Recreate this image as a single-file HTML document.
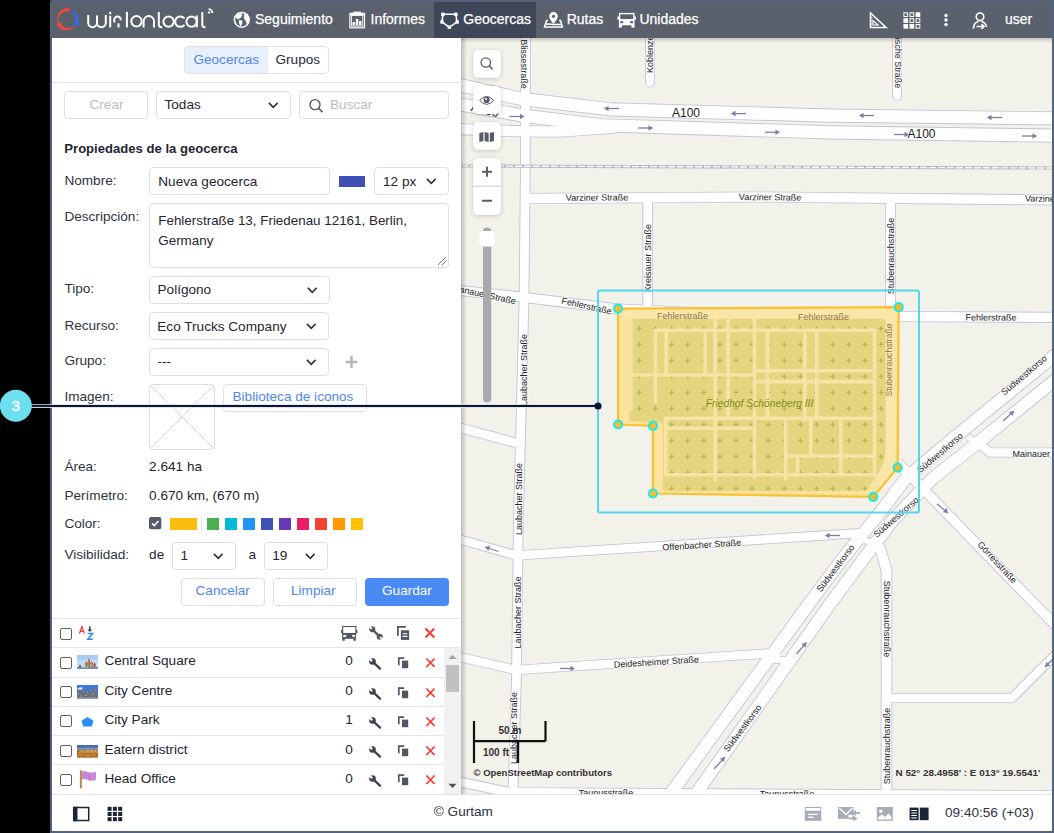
<!DOCTYPE html>
<html><head><meta charset="utf-8">
<style>
*{box-sizing:border-box;margin:0;padding:0}
html,body{width:1054px;height:833px;overflow:hidden;background:#000;font-family:"Liberation Sans",sans-serif}
#app{position:absolute;left:50px;top:0;width:1004px;height:833px;background:#56637c;border-radius:2px 0 0 0}
#hdr{position:absolute;left:52px;top:2px;width:1000px;height:36px;background:#5b616c}
#panel{position:absolute;left:52px;top:38px;width:409px;height:757px;background:#fff}
#map{position:absolute;left:461px;top:38px;width:591px;height:757px;background:#f2efe9;overflow:hidden}
#ftr{position:absolute;left:52px;top:795px;width:1000px;height:36px;background:#fff}
.t{position:absolute;line-height:1;white-space:nowrap}
.box{position:absolute;border:1px solid #dcdfe3;border-radius:4px;background:#fff}
.chev{position:absolute;width:7px;height:7px;border-right:1.6px solid #333;border-bottom:1.6px solid #333;transform:rotate(45deg)}
.lbl{font-size:13.6px;color:#2e3440}
.val{font-size:13.6px;color:#1f2531}
.nav{font-size:14px;color:#fff;-webkit-text-stroke:0.25px #fff}
.cb{position:absolute;width:12px;height:12px;border:1.3px solid #5c616b;border-radius:2px;background:#fff}
.sw{position:absolute;top:518px;width:12px;height:12px}
.row{position:absolute;left:52px;width:392px;height:1px;background:#e4e4e4}
</style></head><body>
<div id="app"></div>
<div id="hdr"></div>
<svg style="position:absolute;left:0;top:0" width="1054" height="40" viewBox="0 0 1054 40">
 <g><path d="M68.20,7.93 L67.28,7.96 L66.38,8.07 L65.48,8.25 L64.61,8.50 L63.77,8.82 L62.96,9.20 L62.19,9.64 L61.46,10.14 L60.78,10.69 L60.15,11.30 L59.57,11.95 L59.05,12.63 L58.58,13.36 L58.18,14.11 L57.85,14.89 L57.58,15.69 L57.37,16.51 L57.23,17.33 L57.16,18.16 L57.16,18.98 L57.22,19.80 L57.35,20.60 L57.54,21.39 L57.79,22.16 L58.36,21.99 L58.25,21.25 L58.19,20.50 L58.19,19.76 L58.26,19.03 L58.38,18.31 L58.56,17.60 L58.79,16.92 L59.07,16.26 L59.41,15.63 L59.79,15.03 L60.21,14.48 L60.68,13.96 L61.18,13.48 L61.71,13.05 L62.28,12.66 L62.87,12.33 L63.48,12.04 L64.10,11.81 L64.74,11.63 L65.38,11.50 L66.03,11.43 L66.68,11.41 L67.32,11.44 L67.95,11.52Z" fill="#f5473a"/><circle cx="68.08" cy="9.72" r="1.80" fill="#f5473a"/><path d="M57.27,25.25 L57.80,25.97 L58.39,26.63 L59.02,27.25 L59.69,27.82 L60.40,28.33 L61.14,28.77 L61.90,29.16 L62.69,29.49 L63.50,29.75 L64.32,29.95 L65.15,30.09 L65.98,30.16 L66.81,30.16 L67.63,30.11 L68.44,29.99 L69.23,29.81 L70.01,29.57 L70.75,29.27 L71.47,28.92 L72.15,28.52 L72.79,28.07 L73.40,27.58 L73.96,27.04 L74.47,26.47 L74.05,26.05 L73.47,26.48 L72.87,26.87 L72.25,27.20 L71.61,27.49 L70.95,27.72 L70.28,27.90 L69.61,28.03 L68.93,28.10 L68.26,28.12 L67.59,28.09 L66.93,28.01 L66.28,27.88 L65.66,27.70 L65.05,27.47 L64.46,27.20 L63.91,26.89 L63.38,26.54 L62.89,26.16 L62.43,25.74 L62.01,25.29 L61.62,24.81 L61.28,24.31 L60.99,23.79 L60.73,23.25Z" fill="#f5473a"/><circle cx="59.00" cy="24.25" r="2.00" fill="#f5473a"/><path d="M69.14,9.55 L69.93,9.66 L70.72,9.84 L71.50,10.08 L72.26,10.38 L73.00,10.74 L73.72,11.17 L74.40,11.65 L75.04,12.19 L75.64,12.79 L76.19,13.43 L76.69,14.12 L77.14,14.86 L77.53,15.63 L77.86,16.43 L78.13,17.27 L78.33,18.12 L78.46,19.00 L78.51,19.89 L78.50,20.78 L78.42,21.67 L78.26,22.57 L78.03,23.45 L77.73,24.31 L77.36,25.15 L74.24,23.35 L74.59,22.82 L74.90,22.25 L75.16,21.66 L75.38,21.05 L75.55,20.41 L75.67,19.76 L75.73,19.10 L75.74,18.42 L75.70,17.75 L75.60,17.07 L75.45,16.40 L75.24,15.74 L74.98,15.10 L74.66,14.47 L74.29,13.87 L73.87,13.29 L73.41,12.75 L72.89,12.24 L72.34,11.77 L71.74,11.35 L71.11,10.97 L70.45,10.64 L69.75,10.36 L69.03,10.14Z" fill="#2d6bff"/><circle cx="75.80" cy="24.25" r="1.80" fill="#2d6bff"/></g>
 <g fill="none" stroke="#fff" stroke-width="2" stroke-linecap="butt">
  <path d="M88.2,15 V22.8 a4.4,4.4 0 0 0 8.8,0 V15.5 M97,22.8 a4.4,4.4 0 0 0 8.8,0 V15"/>
  <path d="M110.2,15.8 V27.4 M110.2,11.8 V14.2"/>
  <path d="M114.3,22.6 V19.6 a3.2,3.2 0 0 1 6.4,0 V20.3 M118.5,23.2 V27.4"/>
  <path d="M126.9,11.8 V27.4"/>
  <circle cx="136.5" cy="21.3" r="5.2"/>
  <path d="M143.6,27.4 V21.3 a5.2,5.2 0 0 1 10.4,0 V27.4"/>
  <path d="M158.8,12 V24.6 a2.6,2.6 0 0 0 2.6,2.6 h0.8"/>
  <circle cx="168.6" cy="21.6" r="5.2"/>
  <path d="M184.4,18.4 A5.2,5.2 0 1 0 184.4,24.8"/>
  <circle cx="191.6" cy="21.6" r="5.2"/>
  <path d="M196.8,15.5 V27.4"/>
  <path d="M202.3,12 V24.6 a2.6,2.6 0 0 0 2.6,2.6 h0.6"/>
  <path d="M208.6,9.2 a3.8,3.8 0 0 1 3.8,3.8" stroke-width="1.8"/>
 </g>
 <circle cx="209" cy="12.4" r="1.2" fill="#fff"/>
</svg>
<div style="position:absolute;left:434px;top:2px;width:102px;height:36px;background:#3e4657"></div>
<svg style="position:absolute;left:0;top:0" width="1054" height="40" viewBox="0 0 1054 40">
 <!-- globe -->
 <circle cx="241.8" cy="19.8" r="7.4" fill="none" stroke="#fff" stroke-width="1.5"/>
 <path d="M235.6,16.5 Q237.5,13 241.5,13.2 L242.3,15.5 L240.8,17.8 L238.3,19.2 Q236,18.5 235.6,16.5Z" fill="#fff"/>
 <path d="M238.8,20.2 L242.4,20.6 L242.2,23.8 L240.2,26.6 L239.2,23.6Z" fill="#fff"/>
 <path d="M244.3,13.8 L247.3,14.8 L249,17.8 L248.6,21.6 L246.6,24 L245.6,20.8 L243.8,18.6 Z" fill="#fff"/>
 <!-- informes clipboard -->
 <rect x="349.9" y="13.4" width="14.6" height="14.4" fill="none" stroke="#fff" stroke-width="1.2"/>
 <rect x="351.6" y="15.4" width="11.2" height="10.7" fill="none" stroke="#fff" stroke-width="0.9"/>
 <rect x="350" y="13" width="14.5" height="2.3" fill="#fff"/>
 <rect x="353.2" y="11.6" width="7.8" height="2" fill="#fff"/>
 <rect x="352.6" y="22" width="2.4" height="3.4" fill="#fff"/>
 <rect x="355.8" y="19" width="2.5" height="6.4" fill="#fff"/>
 <rect x="359.1" y="21" width="2.4" height="4.4" fill="#fff"/>
 <!-- geocercas polygon -->
 <path d="M443,14.2 L455.8,14.2 L457,22 L449.3,27.3 L442,22 Z" fill="none" stroke="#fff" stroke-width="1.6"/>
 <rect x="441.2" y="12.6" width="3.4" height="3.4" fill="#fff"/><rect x="454.2" y="12.6" width="3.4" height="3.4" fill="#fff"/>
 <rect x="455.4" y="20.3" width="3.4" height="3.4" fill="#fff"/><rect x="447.6" y="25.5" width="3.4" height="3.4" fill="#fff"/>
 <rect x="440.3" y="20.3" width="3.4" height="3.4" fill="#fff"/>
 <!-- rutas -->
 <path d="M553.5,24 C551,20.5 549.2,18.5 549.2,16.2 a4.3,4.3 0 0 1 8.6,0 C557.8,18.5 556,20.5 553.5,24z" fill="#fff"/>
 <circle cx="553.5" cy="16.3" r="1.6" fill="#5b616c"/>
 <path d="M548,20.5 H546.5 L544.5,27 H562.5 L560.5,20.5 H559 M545.5,24.3 C549,23 553,25.5 561.5,24.3" fill="none" stroke="#fff" stroke-width="1.5"/>
 <!-- unidades bus -->
 <rect x="619.6" y="13.6" width="14.2" height="6.4" fill="none" stroke="#fff" stroke-width="1.4"/>
 <rect x="618.9" y="19.3" width="15.6" height="6" fill="#fff"/>
 <rect x="620.3" y="21.2" width="3" height="2" fill="#5b616c"/><rect x="630.1" y="21.2" width="3" height="2" fill="#5b616c"/>
 <rect x="618.9" y="25" width="3" height="2.6" fill="#fff"/><rect x="631.5" y="25" width="3" height="2.6" fill="#fff"/>
 <rect x="617.5" y="16.5" width="1.6" height="3.2" fill="#fff"/><rect x="634.3" y="16.5" width="1.6" height="3.2" fill="#fff"/>
 <!-- ruler triangle -->
 <path d="M870.5,13 V27.5 H886 Z" fill="none" stroke="#fff" stroke-width="1.6" stroke-linejoin="miter"/>
 <path d="M873,20.5 V25 H878 Z" fill="none" stroke="#fff" stroke-width="1.2"/>
 <path d="M870.5,18 h2 M870.5,21 h2 M870.5,24 h2" stroke="#fff" stroke-width="1"/>
 <!-- grid -->
 <g fill="none" stroke="#fff" stroke-width="1"><rect x="903.9" y="12.8" width="3.7" height="3.7"/><rect x="910.0" y="12.8" width="3.7" height="3.7"/><rect x="910.0" y="18.7" width="3.7" height="3.7"/><rect x="916.1" y="18.7" width="3.7" height="3.7"/><rect x="916.1" y="24.5" width="3.7" height="3.7"/></g>
 <g fill="#fff"><rect x="915.6" y="12.3" width="4.7" height="4.7"/><rect x="903.4" y="18.2" width="4.7" height="4.7"/><rect x="903.4" y="24.0" width="4.7" height="4.7"/><rect x="909.5" y="24.0" width="4.7" height="4.7"/></g>
 <circle cx="946" cy="15.5" r="1.7" fill="#fff"/><circle cx="946" cy="20" r="1.7" fill="#fff"/><circle cx="946" cy="24.6" r="1.7" fill="#fff"/>
 <!-- user -->
 <circle cx="980" cy="16.8" r="3.8" fill="none" stroke="#fff" stroke-width="1.6"/>
 <path d="M973.5,28.8 C973.5,24.5 976,22 978.5,21.5 M981.5,21.5 C984,22 986.5,24.5 986.5,27" fill="none" stroke="#fff" stroke-width="1.6"/>
 <path d="M976.5,26.5 H984 M981.5,24 L984,26.5 L981.5,29" fill="none" stroke="#fff" stroke-width="1.6"/>
</svg>
<div class="t nav" style="left:255px;top:12px">Seguimiento</div>
<div class="t nav" style="left:370.5px;top:12px">Informes</div>
<div class="t nav" style="left:463.3px;top:12px">Geocercas</div>
<div class="t nav" style="left:566.7px;top:12px">Rutas</div>
<div class="t nav" style="left:639.4px;top:12px">Unidades</div>
<div class="t nav" style="left:1005px;top:12px">user</div>

<div id="panel"></div>
<!-- segmented tabs -->
<div class="box" style="left:184px;top:46px;width:145px;height:28px;overflow:hidden;border-color:#e0e3e8"><div style="position:absolute;left:0;top:0;width:82.5px;height:100%;background:#e8f0fd"></div></div>
<div class="t" style="left:193.4px;top:52.5px;font-size:13.6px;color:#4f87f0">Geocercas</div>
<div class="t" style="left:275.5px;top:52.5px;font-size:13.6px;color:#272c35">Grupos</div>
<div style="position:absolute;left:52px;top:82px;width:409px;height:1px;background:#e6e6e6"></div>
<!-- toolbar -->
<div class="box" style="left:64px;top:91px;width:84px;height:28px"></div>
<div class="t" style="left:89.5px;top:97.8px;font-size:13.6px;color:#b9bec6">Crear</div>
<div class="box" style="left:156px;top:91px;width:135px;height:28px"></div>
<div class="t val" style="left:164.5px;top:97.8px">Todas</div>
<svg style="position:absolute;left:267.5px;top:101.5px" width="11" height="7"><path d="M0.9,0.9 L5.25,5.3 L9.6,0.9" fill="none" stroke="#2c323d" stroke-width="1.6"/></svg>
<div class="box" style="left:299px;top:91px;width:149.5px;height:28px"></div>
<svg style="position:absolute;left:308px;top:98px" width="18" height="16"><circle cx="7" cy="6.6" r="5" fill="none" stroke="#555b66" stroke-width="1.4"/><path d="M10.6,10.2 L14.5,14.1" stroke="#555b66" stroke-width="1.6"/></svg>
<div class="t" style="left:330px;top:97.8px;font-size:13.6px;color:#b9bec6">Buscar</div>
<!-- properties -->
<div class="t" style="left:64.3px;top:141.8px;font-size:13.1px;font-weight:bold;color:#1f2633">Propiedades de la geocerca</div>
<div class="t lbl" style="left:64.4px;top:173.5px">Nombre:</div>
<div class="box" style="left:149px;top:167px;width:181px;height:28px"></div>
<div class="t val" style="left:158.3px;top:174.5px">Nueva geocerca</div>
<div style="position:absolute;left:339px;top:176px;width:25.5px;height:10.5px;background:#3f4fb5"></div>
<div class="box" style="left:374px;top:167px;width:75px;height:28px"></div>
<div class="t val" style="left:383px;top:174.5px">12 px</div>
<svg style="position:absolute;left:425.5px;top:177.5px" width="11" height="7"><path d="M0.9,0.9 L5.25,5.3 L9.6,0.9" fill="none" stroke="#2c323d" stroke-width="1.6"/></svg>
<div class="t lbl" style="left:64.4px;top:209.6px">Descripción:</div>
<div class="box" style="left:149px;top:203px;width:300px;height:65px"></div>
<div class="t val" style="left:158.3px;top:214px;font-size:13.4px">Fehlerstraße 13, Friedenau 12161, Berlin,</div>
<div class="t val" style="left:158.3px;top:234px;font-size:13.4px">Germany</div>
<svg style="position:absolute;left:437px;top:256px" width="10" height="10"><path d="M1,9 L9,1 M5,9 L9,5" stroke="#777" stroke-width="1"/></svg>
<div class="t lbl" style="left:64.4px;top:282.3px">Tipo:</div>
<div class="box" style="left:149px;top:276px;width:181px;height:28px"></div>
<div class="t val" style="left:157.5px;top:283.2px">Polígono</div>
<svg style="position:absolute;left:306.5px;top:286.5px" width="11" height="7"><path d="M0.9,0.9 L5.25,5.3 L9.6,0.9" fill="none" stroke="#2c323d" stroke-width="1.6"/></svg>
<div class="t lbl" style="left:64.4px;top:319.3px">Recurso:</div>
<div class="box" style="left:149px;top:312px;width:180px;height:28px"></div>
<div class="t val" style="left:157.3px;top:319.5px">Eco Trucks Company</div>
<svg style="position:absolute;left:306px;top:322.5px" width="11" height="7"><path d="M0.9,0.9 L5.25,5.3 L9.6,0.9" fill="none" stroke="#2c323d" stroke-width="1.6"/></svg>
<div class="t lbl" style="left:64.4px;top:354.2px">Grupo:</div>
<div class="box" style="left:149px;top:348px;width:180px;height:28px"></div>
<div class="t val" style="left:157.5px;top:355px">---</div>
<svg style="position:absolute;left:306px;top:358.5px" width="11" height="7"><path d="M0.9,0.9 L5.25,5.3 L9.6,0.9" fill="none" stroke="#2c323d" stroke-width="1.6"/></svg>
<svg style="position:absolute;left:344px;top:355px" width="15" height="14"><path d="M7.5,1 V13 M1.5,7 H13.5" stroke="#b4b8bf" stroke-width="2.6"/></svg>
<div class="t lbl" style="left:64.4px;top:390px">Imagen:</div>
<div class="box" style="left:149px;top:384px;width:66px;height:66px;border-color:#dadde2"></div>
<svg style="position:absolute;left:150px;top:385px" width="64" height="64"><path d="M0,0 L64,64 M64,0 L0,64" stroke="#d6d8dc" stroke-width="1"/></svg>
<div class="box" style="left:223px;top:384px;width:144px;height:28px"></div>
<div class="t" style="left:232.5px;top:390px;font-size:13.6px;color:#4f87f0">Biblioteca de iconos</div>
<div class="t lbl" style="left:64.4px;top:460.4px">Área:</div>
<div class="t val" style="left:149.1px;top:460.4px">2.641 ha</div>
<div class="t lbl" style="left:64.4px;top:488.6px">Perímetro:</div>
<div class="t val" style="left:149.1px;top:488.6px">0.670 km, (670 m)</div>
<div class="t lbl" style="left:64.4px;top:516.8px">Color:</div>
<svg style="position:absolute;left:149px;top:517.4px" width="13" height="13"><rect x="0" y="0" width="12.3" height="12.2" rx="2" fill="#565c67"/><path d="M3,6.3 L5.3,8.5 L9.5,4" fill="none" stroke="#fff" stroke-width="1.6"/></svg>
<div style="position:absolute;left:169.5px;top:518.3px;width:27px;height:11.5px;background:#fdbd10"></div>
<div style="position:absolute;left:201px;top:516px;width:1px;height:16px;background:#e3e3e3"></div>
<div class="sw" style="left:206.8px;background:#4caf50"></div>
<div class="sw" style="left:225px;background:#00bcd4"></div>
<div class="sw" style="left:243.2px;background:#2196f3"></div>
<div class="sw" style="left:261.4px;background:#3f51b5"></div>
<div class="sw" style="left:279.2px;background:#673ab7"></div>
<div class="sw" style="left:297.2px;background:#e91e63"></div>
<div class="sw" style="left:315.2px;background:#f44336"></div>
<div class="sw" style="left:333px;background:#ff9800"></div>
<div class="sw" style="left:351px;background:#ffc107"></div>
<div class="t lbl" style="left:64.4px;top:548.4px">Visibilidad:</div>
<div class="t val" style="left:149.1px;top:548.4px">de</div>
<div class="box" style="left:172px;top:542px;width:64px;height:28px"></div>
<div class="t val" style="left:180.5px;top:549px">1</div>
<svg style="position:absolute;left:213px;top:552.5px" width="11" height="7"><path d="M0.9,0.9 L5.25,5.3 L9.6,0.9" fill="none" stroke="#2c323d" stroke-width="1.6"/></svg>
<div class="t val" style="left:248.4px;top:548.4px">a</div>
<div class="box" style="left:264px;top:542px;width:64px;height:28px"></div>
<div class="t val" style="left:272.3px;top:549px">19</div>
<svg style="position:absolute;left:305px;top:552.5px" width="11" height="7"><path d="M0.9,0.9 L5.25,5.3 L9.6,0.9" fill="none" stroke="#2c323d" stroke-width="1.6"/></svg>
<div class="box" style="left:181px;top:578px;width:84px;height:28px"></div>
<div class="t" style="left:195.5px;top:584.3px;font-size:13.6px;color:#4f87f0">Cancelar</div>
<div class="box" style="left:273px;top:578px;width:84px;height:28px"></div>
<div class="t" style="left:291px;top:584.3px;font-size:13.6px;color:#4f87f0">Limpiar</div>
<div style="position:absolute;left:365px;top:578px;width:84px;height:28px;background:#4a8af4;border-radius:4px"></div>
<div class="t" style="left:382px;top:584.3px;font-size:13.6px;color:#fff">Guardar</div>
<div style="position:absolute;left:52px;top:618px;width:409px;height:1px;background:#e6e6e6"></div>

<svg style="position:absolute;left:461px;top:38px" width="591" height="757" viewBox="461 38 591 757">
<rect x="461" y="38" width="591" height="757" fill="#f3f2ea"/>
<g fill="none" stroke-linejoin="round">
<path d="M455,84 L521,98.8 L611,109.4 L830,115.6 L1060,118.5" stroke="#c3c3d8" stroke-width="14.1" stroke-linecap="butt"/>
<path d="M455,103.5 L521,115.3 L600,125.2 L830,132.4 L1060,135.7" stroke="#c3c3d8" stroke-width="14.1" stroke-linecap="butt"/>
<path d="M455,129 L521,131.4 L560,131.5 L615,127.5" stroke="#c3c3d8" stroke-width="12.1" stroke-linecap="butt"/>
<path d="M525.5,30 L525.3,170 L524,300 L518.4,520 L516.4,680 L512.7,800" stroke="#c3c3d8" stroke-width="10.6" stroke-linecap="butt"/>
<path d="M649.9,30 L649.9,82.5" stroke="#c3c3d8" stroke-width="9.6" stroke-linecap="round"/>
<path d="M897,30 L897,96" stroke="#c3c3d8" stroke-width="9.6" stroke-linecap="round"/>
<path d="M525,198.5 L761,197 L1060,200" stroke="#c3c3d8" stroke-width="11.1" stroke-linecap="butt"/>
<path d="M647.7,198 L647.7,312" stroke="#c3c3d8" stroke-width="10.6" stroke-linecap="butt"/>
<path d="M890.5,198 L890.5,312" stroke="#c3c3d8" stroke-width="10.6" stroke-linecap="butt"/>
<path d="M455,290 L525,297.5 L618,309 L700,313 L898,316.5 L1060,317.4" stroke="#c3c3d8" stroke-width="11.1" stroke-linecap="butt"/>
<path d="M455,426.5 L520,444" stroke="#c3c3d8" stroke-width="10.6" stroke-linecap="butt"/>
<path d="M455,538 L516,555.5" stroke="#c3c3d8" stroke-width="10.1" stroke-linecap="butt"/>
<path d="M516,555.5 L855.4,533.4 L865,532.5" stroke="#c3c3d8" stroke-width="10.1" stroke-linecap="butt"/>
<path d="M455,656 L516,670" stroke="#c3c3d8" stroke-width="10.1" stroke-linecap="butt"/>
<path d="M516,670 L767.8,653.5 L780,653" stroke="#c3c3d8" stroke-width="10.1" stroke-linecap="butt"/>
<path d="M664,803 L676.2,786 L809.4,603.2 L841.5,560 L882,510 L906,478 L950,441 L1060,351" stroke="#c3c3d8" stroke-width="13.6" stroke-linecap="butt"/>
<path d="M689,803 L701.5,786 L830.6,603.2 L862,561 L893,520 L933,478 L980,441 L1060,376" stroke="#c3c3d8" stroke-width="13.6" stroke-linecap="butt"/>
<path d="M968,437 L986,449" stroke="#c3c3d8" stroke-width="7.6" stroke-linecap="butt"/>
<path d="M856,539 L878,543" stroke="#c3c3d8" stroke-width="7.6" stroke-linecap="butt"/>
<path d="M770,660 L796,660" stroke="#c3c3d8" stroke-width="7.6" stroke-linecap="butt"/>
<path d="M870,541 L880,548 L886.5,570 L886.5,800" stroke="#c3c3d8" stroke-width="11.6" stroke-linecap="butt"/>
<path d="M886.5,698 L1012,698 L1060,650" stroke="#c3c3d8" stroke-width="10.1" stroke-linecap="butt"/>
<path d="M897,462 L1060,630" stroke="#c3c3d8" stroke-width="11.1" stroke-linecap="butt"/>
<path d="M975,440 L990,452.5 L1060,452.5" stroke="#c3c3d8" stroke-width="10.1" stroke-linecap="butt"/>
<path d="M455,781 L510,792.5 L1060,795.5" stroke="#c3c3d8" stroke-width="10.6" stroke-linecap="butt"/>
<path d="M455,84 L521,98.8 L611,109.4 L830,115.6 L1060,118.5" stroke="#fefefe" stroke-width="12.3" stroke-linecap="butt"/>
<path d="M455,103.5 L521,115.3 L600,125.2 L830,132.4 L1060,135.7" stroke="#fefefe" stroke-width="12.3" stroke-linecap="butt"/>
<path d="M455,129 L521,131.4 L560,131.5 L615,127.5" stroke="#fefefe" stroke-width="10.3" stroke-linecap="butt"/>
<path d="M525.5,30 L525.3,170 L524,300 L518.4,520 L516.4,680 L512.7,800" stroke="#fefefe" stroke-width="8.8" stroke-linecap="butt"/>
<path d="M649.9,30 L649.9,82.5" stroke="#fefefe" stroke-width="7.8" stroke-linecap="round"/>
<path d="M897,30 L897,96" stroke="#fefefe" stroke-width="7.8" stroke-linecap="round"/>
<path d="M525,198.5 L761,197 L1060,200" stroke="#fefefe" stroke-width="9.3" stroke-linecap="butt"/>
<path d="M647.7,198 L647.7,312" stroke="#fefefe" stroke-width="8.8" stroke-linecap="butt"/>
<path d="M890.5,198 L890.5,312" stroke="#fefefe" stroke-width="8.8" stroke-linecap="butt"/>
<path d="M455,290 L525,297.5 L618,309 L700,313 L898,316.5 L1060,317.4" stroke="#fefefe" stroke-width="9.3" stroke-linecap="butt"/>
<path d="M455,426.5 L520,444" stroke="#fefefe" stroke-width="8.8" stroke-linecap="butt"/>
<path d="M455,538 L516,555.5" stroke="#fefefe" stroke-width="8.3" stroke-linecap="butt"/>
<path d="M516,555.5 L855.4,533.4 L865,532.5" stroke="#fefefe" stroke-width="8.3" stroke-linecap="butt"/>
<path d="M455,656 L516,670" stroke="#fefefe" stroke-width="8.3" stroke-linecap="butt"/>
<path d="M516,670 L767.8,653.5 L780,653" stroke="#fefefe" stroke-width="8.3" stroke-linecap="butt"/>
<path d="M664,803 L676.2,786 L809.4,603.2 L841.5,560 L882,510 L906,478 L950,441 L1060,351" stroke="#fefefe" stroke-width="11.8" stroke-linecap="butt"/>
<path d="M689,803 L701.5,786 L830.6,603.2 L862,561 L893,520 L933,478 L980,441 L1060,376" stroke="#fefefe" stroke-width="11.8" stroke-linecap="butt"/>
<path d="M968,437 L986,449" stroke="#fefefe" stroke-width="5.8" stroke-linecap="butt"/>
<path d="M856,539 L878,543" stroke="#fefefe" stroke-width="5.8" stroke-linecap="butt"/>
<path d="M770,660 L796,660" stroke="#fefefe" stroke-width="5.8" stroke-linecap="butt"/>
<path d="M870,541 L880,548 L886.5,570 L886.5,800" stroke="#fefefe" stroke-width="9.8" stroke-linecap="butt"/>
<path d="M886.5,698 L1012,698 L1060,650" stroke="#fefefe" stroke-width="8.3" stroke-linecap="butt"/>
<path d="M897,462 L1060,630" stroke="#fefefe" stroke-width="9.3" stroke-linecap="butt"/>
<path d="M975,440 L990,452.5 L1060,452.5" stroke="#fefefe" stroke-width="8.3" stroke-linecap="butt"/>
<path d="M455,781 L510,792.5 L1060,795.5" stroke="#fefefe" stroke-width="8.8" stroke-linecap="butt"/>
</g>
<path d="M461,166 L1052,168" stroke="#b8b8c4" stroke-width="3.2" fill="none"/>
<path d="M461,166 L1052,168" stroke="#fafafa" stroke-width="1.4" stroke-dasharray="7,2" fill="none"/>
<path d="M618.1,308.6 L898.7,307.2 L897.7,467.7 L873.2,496.8 L652.9,493.5 L652.9,425.8 L618.1,424.5Z" fill="#fbe29e"/>
<path d="M631,319 L883,319 Q886,319 886,322 L886,452 Q886,460 880,470 L868,488 Q866,491 862,491 L666,491 Q663,491 663,488 L663,423 L632,421 Q629,421 629,418 L629,321 Q629,319 631,319Z" fill="#e5d57f"/>
<clipPath id="olc"><path d="M631,319 L883,319 Q886,319 886,322 L886,452 Q886,460 880,470 L868,488 Q866,491 862,491 L666,491 Q663,491 663,488 L663,423 L632,421 Q629,421 629,418 L629,321 Q629,319 631,319Z"/></clipPath>
<path clip-path="url(#olc)" d="M636.9,328.4h5M639.4,325.9v5M636.9,344.4h5M639.4,341.9v5M636.9,360.4h5M639.4,357.9v5M636.9,376.4h5M639.4,373.9v5M636.9,392.4h5M639.4,389.9v5M636.9,408.4h5M639.4,405.9v5M636.9,424.4h5M639.4,421.9v5M636.9,440.4h5M639.4,437.9v5M636.9,456.4h5M639.4,453.9v5M636.9,472.4h5M639.4,469.9v5M636.9,488.4h5M639.4,485.9v5M653.0,328.4h5M655.5,325.9v5M653.0,344.4h5M655.5,341.9v5M653.0,360.4h5M655.5,357.9v5M653.0,376.4h5M655.5,373.9v5M653.0,392.4h5M655.5,389.9v5M653.0,408.4h5M655.5,405.9v5M653.0,424.4h5M655.5,421.9v5M653.0,440.4h5M655.5,437.9v5M653.0,456.4h5M655.5,453.9v5M653.0,472.4h5M655.5,469.9v5M653.0,488.4h5M655.5,485.9v5M669.1,328.4h5M671.6,325.9v5M669.1,344.4h5M671.6,341.9v5M669.1,360.4h5M671.6,357.9v5M669.1,376.4h5M671.6,373.9v5M669.1,392.4h5M671.6,389.9v5M669.1,408.4h5M671.6,405.9v5M669.1,424.4h5M671.6,421.9v5M669.1,440.4h5M671.6,437.9v5M669.1,456.4h5M671.6,453.9v5M669.1,472.4h5M671.6,469.9v5M669.1,488.4h5M671.6,485.9v5M685.2,328.4h5M687.7,325.9v5M685.2,344.4h5M687.7,341.9v5M685.2,360.4h5M687.7,357.9v5M685.2,376.4h5M687.7,373.9v5M685.2,392.4h5M687.7,389.9v5M685.2,408.4h5M687.7,405.9v5M685.2,424.4h5M687.7,421.9v5M685.2,440.4h5M687.7,437.9v5M685.2,456.4h5M687.7,453.9v5M685.2,472.4h5M687.7,469.9v5M685.2,488.4h5M687.7,485.9v5M701.3,328.4h5M703.8,325.9v5M701.3,344.4h5M703.8,341.9v5M701.3,360.4h5M703.8,357.9v5M701.3,376.4h5M703.8,373.9v5M701.3,392.4h5M703.8,389.9v5M701.3,408.4h5M703.8,405.9v5M701.3,424.4h5M703.8,421.9v5M701.3,440.4h5M703.8,437.9v5M701.3,456.4h5M703.8,453.9v5M701.3,472.4h5M703.8,469.9v5M701.3,488.4h5M703.8,485.9v5M717.4,328.4h5M719.9,325.9v5M717.4,344.4h5M719.9,341.9v5M717.4,360.4h5M719.9,357.9v5M717.4,376.4h5M719.9,373.9v5M717.4,392.4h5M719.9,389.9v5M717.4,408.4h5M719.9,405.9v5M717.4,424.4h5M719.9,421.9v5M717.4,440.4h5M719.9,437.9v5M717.4,456.4h5M719.9,453.9v5M717.4,472.4h5M719.9,469.9v5M717.4,488.4h5M719.9,485.9v5M733.5,328.4h5M736.0,325.9v5M733.5,344.4h5M736.0,341.9v5M733.5,360.4h5M736.0,357.9v5M733.5,376.4h5M736.0,373.9v5M733.5,392.4h5M736.0,389.9v5M733.5,408.4h5M736.0,405.9v5M733.5,424.4h5M736.0,421.9v5M733.5,440.4h5M736.0,437.9v5M733.5,456.4h5M736.0,453.9v5M733.5,472.4h5M736.0,469.9v5M733.5,488.4h5M736.0,485.9v5M749.6,328.4h5M752.1,325.9v5M749.6,344.4h5M752.1,341.9v5M749.6,360.4h5M752.1,357.9v5M749.6,376.4h5M752.1,373.9v5M749.6,392.4h5M752.1,389.9v5M749.6,408.4h5M752.1,405.9v5M749.6,424.4h5M752.1,421.9v5M749.6,440.4h5M752.1,437.9v5M749.6,456.4h5M752.1,453.9v5M749.6,472.4h5M752.1,469.9v5M749.6,488.4h5M752.1,485.9v5M765.7,328.4h5M768.2,325.9v5M765.7,344.4h5M768.2,341.9v5M765.7,360.4h5M768.2,357.9v5M765.7,376.4h5M768.2,373.9v5M765.7,392.4h5M768.2,389.9v5M765.7,408.4h5M768.2,405.9v5M765.7,424.4h5M768.2,421.9v5M765.7,440.4h5M768.2,437.9v5M765.7,456.4h5M768.2,453.9v5M765.7,472.4h5M768.2,469.9v5M765.7,488.4h5M768.2,485.9v5M781.8,328.4h5M784.3,325.9v5M781.8,344.4h5M784.3,341.9v5M781.8,360.4h5M784.3,357.9v5M781.8,376.4h5M784.3,373.9v5M781.8,392.4h5M784.3,389.9v5M781.8,408.4h5M784.3,405.9v5M781.8,424.4h5M784.3,421.9v5M781.8,440.4h5M784.3,437.9v5M781.8,456.4h5M784.3,453.9v5M781.8,472.4h5M784.3,469.9v5M781.8,488.4h5M784.3,485.9v5M797.9,328.4h5M800.4,325.9v5M797.9,344.4h5M800.4,341.9v5M797.9,360.4h5M800.4,357.9v5M797.9,376.4h5M800.4,373.9v5M797.9,392.4h5M800.4,389.9v5M797.9,408.4h5M800.4,405.9v5M797.9,424.4h5M800.4,421.9v5M797.9,440.4h5M800.4,437.9v5M797.9,456.4h5M800.4,453.9v5M797.9,472.4h5M800.4,469.9v5M797.9,488.4h5M800.4,485.9v5M814.0,328.4h5M816.5,325.9v5M814.0,344.4h5M816.5,341.9v5M814.0,360.4h5M816.5,357.9v5M814.0,376.4h5M816.5,373.9v5M814.0,392.4h5M816.5,389.9v5M814.0,408.4h5M816.5,405.9v5M814.0,424.4h5M816.5,421.9v5M814.0,440.4h5M816.5,437.9v5M814.0,456.4h5M816.5,453.9v5M814.0,472.4h5M816.5,469.9v5M814.0,488.4h5M816.5,485.9v5M830.1,328.4h5M832.6,325.9v5M830.1,344.4h5M832.6,341.9v5M830.1,360.4h5M832.6,357.9v5M830.1,376.4h5M832.6,373.9v5M830.1,392.4h5M832.6,389.9v5M830.1,408.4h5M832.6,405.9v5M830.1,424.4h5M832.6,421.9v5M830.1,440.4h5M832.6,437.9v5M830.1,456.4h5M832.6,453.9v5M830.1,472.4h5M832.6,469.9v5M830.1,488.4h5M832.6,485.9v5M846.2,328.4h5M848.7,325.9v5M846.2,344.4h5M848.7,341.9v5M846.2,360.4h5M848.7,357.9v5M846.2,376.4h5M848.7,373.9v5M846.2,392.4h5M848.7,389.9v5M846.2,408.4h5M848.7,405.9v5M846.2,424.4h5M848.7,421.9v5M846.2,440.4h5M848.7,437.9v5M846.2,456.4h5M848.7,453.9v5M846.2,472.4h5M848.7,469.9v5M846.2,488.4h5M848.7,485.9v5M862.3,328.4h5M864.8,325.9v5M862.3,344.4h5M864.8,341.9v5M862.3,360.4h5M864.8,357.9v5M862.3,376.4h5M864.8,373.9v5M862.3,392.4h5M864.8,389.9v5M862.3,408.4h5M864.8,405.9v5M862.3,424.4h5M864.8,421.9v5M862.3,440.4h5M864.8,437.9v5M862.3,456.4h5M864.8,453.9v5M862.3,472.4h5M864.8,469.9v5M862.3,488.4h5M864.8,485.9v5M878.4,328.4h5M880.9,325.9v5M878.4,344.4h5M880.9,341.9v5M878.4,360.4h5M880.9,357.9v5M878.4,376.4h5M880.9,373.9v5M878.4,392.4h5M880.9,389.9v5M878.4,408.4h5M880.9,405.9v5M878.4,424.4h5M880.9,421.9v5M878.4,440.4h5M880.9,437.9v5M878.4,456.4h5M880.9,453.9v5M878.4,472.4h5M880.9,469.9v5M878.4,488.4h5M880.9,485.9v5" stroke="#b9b555" stroke-width="1.3" fill="none"/>
<g fill="none" stroke="#f8e3a6" stroke-width="3.6" stroke-linecap="round">
<path d="M655.4,330.3 L874.5,330.3"/>
<path d="M631,375 L754.5,375"/>
<path d="M754.5,370.8 L874.5,370.8"/>
<path d="M754.5,381.6 L874.5,381.6"/>
<path d="M665.8,418.3 L874.5,418.3"/>
<path d="M665.8,428.2 L754.5,428.2"/>
<path d="M785.6,456 L874.5,456"/>
<path d="M665.8,474.8 L874.5,474.8"/>
<path d="M630.9,319 L630.9,409.5"/>
<path d="M655.4,330.3 L655.4,402"/>
<path d="M666.2,330.3 L666.2,375"/>
<path d="M705.1,330.3 L705.1,375"/>
<path d="M715.2,319 L715.2,480"/>
<path d="M728.2,319 L728.2,418.3"/>
<path d="M754.5,319 L754.5,478"/>
<path d="M767.6,330.3 L767.6,418.3"/>
<path d="M804.8,330.3 L804.8,420"/>
<path d="M816.8,330.3 L816.8,418.3"/>
<path d="M785.6,418.3 L785.6,479"/>
<path d="M810.8,418.3 L810.8,456"/>
<path d="M840.8,418.3 L840.8,474.8"/>
<path d="M797.6,456 L797.6,474.8"/>
<path d="M874.5,330.3 L874.5,474.8"/>
<path d="M665.8,418.3 L665.8,474.8"/>
</g>
<path d="M890,318 L890,452 Q890,468 878,485" fill="none" stroke="#fbe6aa" stroke-width="9"/>
<path d="M618,313 L898,313" fill="none" stroke="#fbe6aa" stroke-width="9"/>
<path d="M618.1,308.6 L898.7,307.2 L897.7,467.7 L873.2,496.8 L652.9,493.5 L652.9,425.8 L618.1,424.5Z" fill="none" stroke="#f9c232" stroke-width="2.2" stroke-linejoin="round"/>
<text x="521" y="64" font-family="Liberation Sans" font-size="9" fill="#262626" text-anchor="middle" transform="rotate(90 521 64)" stroke="#fafafa" stroke-width="2" stroke-linejoin="round" paint-order="stroke">Blissestraße</text>
<text x="653" y="73" font-family="Liberation Sans" font-size="9" fill="#262626" text-anchor="start" transform="rotate(-90 653 73)" stroke="#fafafa" stroke-width="2" stroke-linejoin="round" paint-order="stroke">Koblenzer Straße</text>
<text x="894.5" y="63" font-family="Liberation Sans" font-size="9" fill="#262626" text-anchor="middle" transform="rotate(90 894.5 63)" stroke="#fafafa" stroke-width="2" stroke-linejoin="round" paint-order="stroke">ische Straße</text>
<text x="686" y="116.5" font-family="Liberation Sans" font-size="12" fill="#222" text-anchor="middle">A100</text>
<text x="484" y="114" font-family="Liberation Sans" font-size="12" fill="#222" text-anchor="middle" transform="rotate(13 484 114)">A100</text>
<text x="921.5" y="138.2" font-family="Liberation Sans" font-size="12" fill="#222" text-anchor="middle">A100</text>
<text x="597" y="200.6" font-family="Liberation Sans" font-size="9" fill="#262626" text-anchor="middle" transform="rotate(-0.4 597 200.6)" stroke="#fafafa" stroke-width="2" stroke-linejoin="round" paint-order="stroke">Varziner Straße</text>
<text x="770" y="200.3" font-family="Liberation Sans" font-size="9" fill="#262626" text-anchor="middle" transform="rotate(0.4 770 200.3)" stroke="#fafafa" stroke-width="2" stroke-linejoin="round" paint-order="stroke">Varziner Straße</text>
<text x="1025" y="201.5" font-family="Liberation Sans" font-size="9" fill="#262626" text-anchor="start" transform="rotate(0.6 1025 201.5)" stroke="#fafafa" stroke-width="2" stroke-linejoin="round" paint-order="stroke">Varziner</text>
<text x="651" y="258" font-family="Liberation Sans" font-size="9" fill="#262626" text-anchor="middle" transform="rotate(-90 651 258)" stroke="#fafafa" stroke-width="2" stroke-linejoin="round" paint-order="stroke">Kreisauer Straße</text>
<text x="894" y="256" font-family="Liberation Sans" font-size="9" fill="#262626" text-anchor="middle" transform="rotate(-90 894 256)" stroke="#fafafa" stroke-width="2" stroke-linejoin="round" paint-order="stroke">Stubenrauchstraße</text>
<text x="484" y="297.5" font-family="Liberation Sans" font-size="9" fill="#262626" text-anchor="middle" transform="rotate(12.5 484 297.5)" stroke="#fafafa" stroke-width="2" stroke-linejoin="round" paint-order="stroke">Hanauer Straße</text>
<text x="586" y="309" font-family="Liberation Sans" font-size="9" fill="#262626" text-anchor="middle" transform="rotate(12.5 586 309)" stroke="#fafafa" stroke-width="2" stroke-linejoin="round" paint-order="stroke">Fehlerstraße</text>
<text x="991" y="320.5" font-family="Liberation Sans" font-size="9" fill="#262626" text-anchor="middle" transform="rotate(0.3 991 320.5)" stroke="#fafafa" stroke-width="2" stroke-linejoin="round" paint-order="stroke">Fehlerstraße</text>
<text x="527" y="370" font-family="Liberation Sans" font-size="9" fill="#262626" text-anchor="middle" transform="rotate(-90 527 370)" stroke="#fafafa" stroke-width="2" stroke-linejoin="round" paint-order="stroke">Laubacher Straße</text>
<text x="521.5" y="499" font-family="Liberation Sans" font-size="9" fill="#262626" text-anchor="middle" transform="rotate(-90 521.5 499)" stroke="#fafafa" stroke-width="2" stroke-linejoin="round" paint-order="stroke">Laubacher Straße</text>
<text x="517" y="728" font-family="Liberation Sans" font-size="9" fill="#262626" text-anchor="middle" transform="rotate(-90 517 728)" stroke="#fafafa" stroke-width="2" stroke-linejoin="round" paint-order="stroke">Laubacher Straße</text>
<text x="521" y="612.5" font-family="Liberation Sans" font-size="9" fill="#262626" text-anchor="middle" transform="rotate(-90 521 612.5)" stroke="#fafafa" stroke-width="2" stroke-linejoin="round" paint-order="stroke">Laubacher Straße</text>
<text x="702" y="548" font-family="Liberation Sans" font-size="9" fill="#262626" text-anchor="middle" transform="rotate(-3.6 702 548)" stroke="#fafafa" stroke-width="2" stroke-linejoin="round" paint-order="stroke">Offenbacher Straße</text>
<text x="656.5" y="665" font-family="Liberation Sans" font-size="9" fill="#262626" text-anchor="middle" transform="rotate(-3.6 656.5 665)" stroke="#fafafa" stroke-width="2" stroke-linejoin="round" paint-order="stroke">Deidesheimer Straße</text>
<text x="838" y="570" font-family="Liberation Sans" font-size="9" fill="#262626" text-anchor="middle" transform="rotate(-53 838 570)" stroke="#fafafa" stroke-width="2" stroke-linejoin="round" paint-order="stroke">Südwestkorso</text>
<text x="745" y="730" font-family="Liberation Sans" font-size="9" fill="#262626" text-anchor="middle" transform="rotate(-53 745 730)" stroke="#fafafa" stroke-width="2" stroke-linejoin="round" paint-order="stroke">Südwestkorso</text>
<text x="898" y="519.5" font-family="Liberation Sans" font-size="9" fill="#262626" text-anchor="middle" transform="rotate(-41 898 519.5)" stroke="#fafafa" stroke-width="2" stroke-linejoin="round" paint-order="stroke">Südwestkorso</text>
<text x="1026" y="377.5" font-family="Liberation Sans" font-size="9" fill="#262626" text-anchor="middle" transform="rotate(-40 1026 377.5)" stroke="#fafafa" stroke-width="2" stroke-linejoin="round" paint-order="stroke">Südwestkorso</text>
<text x="942" y="455" font-family="Liberation Sans" font-size="9" fill="#262626" text-anchor="middle" transform="rotate(-40 942 455)" stroke="#fafafa" stroke-width="2" stroke-linejoin="round" paint-order="stroke">Südwestkorso</text>
<text x="995" y="564.5" font-family="Liberation Sans" font-size="9" fill="#262626" text-anchor="middle" transform="rotate(47.5 995 564.5)" stroke="#fafafa" stroke-width="2" stroke-linejoin="round" paint-order="stroke">Görresstraße</text>
<text x="884" y="619" font-family="Liberation Sans" font-size="9" fill="#262626" text-anchor="middle" transform="rotate(90 884 619)" stroke="#fafafa" stroke-width="2" stroke-linejoin="round" paint-order="stroke">Stubenrauchstraße</text>
<text x="890" y="746" font-family="Liberation Sans" font-size="9" fill="#262626" text-anchor="middle" transform="rotate(-90 890 746)" stroke="#fafafa" stroke-width="2" stroke-linejoin="round" paint-order="stroke">Stubenrauchstraße</text>
<text x="1050" y="456.5" font-family="Liberation Sans" font-size="9" fill="#262626" text-anchor="end" stroke="#fafafa" stroke-width="2" stroke-linejoin="round" paint-order="stroke">Mainauer</text>
<text x="606" y="796" font-family="Liberation Sans" font-size="9" fill="#262626" text-anchor="middle" stroke="#fafafa" stroke-width="2" stroke-linejoin="round" paint-order="stroke">Taunusstraße</text>
<text x="787" y="797" font-family="Liberation Sans" font-size="9" fill="#262626" text-anchor="middle" stroke="#fafafa" stroke-width="2" stroke-linejoin="round" paint-order="stroke">Taunusstraße</text>
<text x="682.5" y="319" font-family="Liberation Sans" font-size="9" fill="#8a7a4e" text-anchor="middle">Fehlerstraße</text>
<text x="823.5" y="320.3" font-family="Liberation Sans" font-size="9" fill="#8c7b50" text-anchor="middle">Fehlerstraße</text>
<text x="892" y="360" font-family="Liberation Sans" font-size="8.6" fill="#8a7a4e" text-anchor="middle" transform="rotate(-90 892 360)">Stubenrauchstraße</text>
<text x="759.5" y="407" font-family="Liberation Sans" font-size="10.3" fill="#7f8c14" text-anchor="middle" font-style="italic">Friedhof Schöneberg III</text>
<g stroke="#7d7fa6" stroke-width="1.3" fill="#7d7fa6">
<path d="M605,108.5 h14" fill="none"/><path d="M604,108.5 l4.5,-2.8 v5.6z" stroke="none"/>
<path d="M732,113.6 h14" fill="none"/><path d="M731,113.6 l4.5,-2.8 v5.6z" stroke="none"/>
<path d="M638,128 h14" fill="none"/><path d="M653,128 l-4.5,-2.8 v5.6z" stroke="none"/>
<path d="M765,132.3 h14" fill="none"/><path d="M780,132.3 l-4.5,-2.8 v5.6z" stroke="none"/>
<path d="M860,115.5 h14" fill="none"/><path d="M859,115.5 l4.5,-2.8 v5.6z" stroke="none"/>
<path d="M988,117.5 h14" fill="none"/><path d="M987,117.5 l4.5,-2.8 v5.6z" stroke="none"/>
<path d="M894,134.5 h14" fill="none"/><path d="M909,134.5 l-4.5,-2.8 v5.6z" stroke="none"/>
<path d="M1022,136 h14" fill="none"/><path d="M1037,136 l-4.5,-2.8 v5.6z" stroke="none"/>
<path d="M509.5,116.5 h14" fill="none"/><path d="M524.5,116.5 l-4.5,-2.8 v5.6z" stroke="none"/>
<path d="M826,535.5 h14" fill="none"/><path d="M825,535.5 l4.5,-2.8 v5.6z" stroke="none"/>
<path d="M560,668.5 h14" fill="none"/><path d="M575,668.5 l-4.5,-2.8 v5.6z" stroke="none"/>
</g>
<path d="M796.5,654 L806.5,642.5" stroke="#7d7fa6" stroke-width="1.3"/><path d="M806.5,642.5 L801.4,644.1 L805.7,647.7z" fill="#7d7fa6"/>
<path d="M714,769 L725,757" stroke="#7d7fa6" stroke-width="1.3"/><path d="M725.0,757.0 L719.9,758.4 L724.0,762.2z" fill="#7d7fa6"/>
<path d="M1003,421 L1014,411" stroke="#7d7fa6" stroke-width="1.3"/><path d="M1014.0,411.0 L1008.8,412.0 L1012.6,416.1z" fill="#7d7fa6"/>
<path d="M937,504 L948,513" stroke="#7d7fa6" stroke-width="1.3"/><path d="M948.0,513.0 L946.3,508.0 L942.7,512.3z" fill="#7d7fa6"/>
<path d="M1052.5,659.5 L1045,667" stroke="#7d7fa6" stroke-width="1.3"/><path d="M1045.0,667.0 L1050.2,665.8 L1046.2,661.8z" fill="#7d7fa6"/>
<path d="M498.4,551.5 L485,547" stroke="#7d7fa6" stroke-width="1.3"/><path d="M485.0,547.0 L488.4,551.1 L490.2,545.8z" fill="#7d7fa6"/>
<rect x="598" y="290.5" width="321" height="222" rx="2" fill="none" stroke="#52d8ea" stroke-width="2"/>
<circle cx="618.1" cy="308.6" r="4.1" fill="#fbb92a" stroke="#10ecf2" stroke-width="2"/>
<circle cx="898.7" cy="307.2" r="4.1" fill="#fbb92a" stroke="#10ecf2" stroke-width="2"/>
<circle cx="897.7" cy="467.7" r="4.1" fill="#fbb92a" stroke="#10ecf2" stroke-width="2"/>
<circle cx="873.2" cy="496.8" r="4.1" fill="#fbb92a" stroke="#10ecf2" stroke-width="2"/>
<circle cx="652.9" cy="493.5" r="4.1" fill="#fbb92a" stroke="#10ecf2" stroke-width="2"/>
<circle cx="652.9" cy="425.8" r="4.1" fill="#fbb92a" stroke="#10ecf2" stroke-width="2"/>
<circle cx="618.1" cy="424.5" r="4.1" fill="#fbb92a" stroke="#10ecf2" stroke-width="2"/>
<g stroke="#111" stroke-width="2.2" fill="none"><path d="M474,721 V763 M474,741.2 H545.5 M545.5,721 V741.2 M518,741.2 V763"/></g>
<text x="498.5" y="734" font-family="Liberation Sans" font-size="10" font-weight="bold" fill="#333">50 m</text>
<text x="483" y="755.5" font-family="Liberation Sans" font-size="10" font-weight="bold" fill="#333">100 ft</text>
<text x="473.5" y="776" font-family="Liberation Sans" font-size="9.5" font-weight="bold" fill="#333">© OpenStreetMap contributors</text>
<text x="895.5" y="775.8" font-family="Liberation Sans" font-size="9.9" font-weight="bold" fill="#333">N 52° 28.4958' : E 013° 19.5541'</text>
<defs><linearGradient id="shl" x1="0" x2="1" y1="0" y2="0"><stop offset="0" stop-color="#000" stop-opacity="0.22"/><stop offset="1" stop-color="#000" stop-opacity="0"/></linearGradient><linearGradient id="sht" x1="0" x2="0" y1="0" y2="1"><stop offset="0" stop-color="#000" stop-opacity="0.18"/><stop offset="1" stop-color="#000" stop-opacity="0"/></linearGradient><filter id="bs" x="-30%" y="-30%" width="160%" height="160%"><feGaussianBlur stdDeviation="2.5"/></filter></defs>
<rect x="461" y="38" width="6" height="757" fill="url(#shl)"/>
<rect x="461" y="38" width="591" height="5" fill="url(#sht)"/>
<rect x="473.2" y="51" width="27.7" height="27.7" rx="5" fill="#000" opacity="0.18" filter="url(#bs)"/><rect x="473.2" y="50" width="27.7" height="27.7" rx="5" fill="#fff"/>
<rect x="473.2" y="87.2" width="27.7" height="27.8" rx="5" fill="#000" opacity="0.18" filter="url(#bs)"/><rect x="473.2" y="86.2" width="27.7" height="27.8" rx="5" fill="#fff"/>
<rect x="473.2" y="123" width="27.7" height="27.8" rx="5" fill="#000" opacity="0.18" filter="url(#bs)"/><rect x="473.2" y="122" width="27.7" height="27.8" rx="5" fill="#fff"/>
<rect x="473.2" y="159.2" width="27.7" height="56.8" rx="5" fill="#000" opacity="0.18" filter="url(#bs)"/><rect x="473.2" y="158.2" width="27.7" height="56.8" rx="5" fill="#fff"/>
<path d="M473.2,186.2 h27.7" stroke="#c9c9cc" stroke-width="1"/>
<circle cx="485.8" cy="62.5" r="4.7" fill="none" stroke="#555d6b" stroke-width="1.3"/><path d="M489.2,65.9 L492.6,69.3" stroke="#555d6b" stroke-width="1.5"/>
<path d="M479.6,100.4 Q486.7,92.5 493.8,100.4 Q486.7,108.3 479.6,100.4Z" fill="none" stroke="#555d6b" stroke-width="1"/><circle cx="486.6" cy="99.9" r="3.1" fill="#555d6b"/><circle cx="486" cy="99" r="1" fill="#fff"/>
<path d="M479.3,133 L483.4,132 V141 L479.3,142Z M484.6,132 L488.6,133 V142 L484.6,141Z M489.8,133 L494,132 V141 L489.8,142Z" fill="#555d6b"/>
<path d="M482,171.8 H492 M487,166.8 V176.8 M482,200.8 H492" stroke="#555d6b" stroke-width="2"/>
<rect x="483" y="227.5" width="8.2" height="175" rx="4.1" fill="#a7a9ac"/>
<rect x="478.8" y="231" width="16.2" height="15.5" rx="5" fill="#fff"/>
</svg>
<div id="ftr"></div>
<!-- list header -->
<div class="cb" style="left:59.8px;top:628.2px"></div>
<svg style="position:absolute;left:77px;top:624px" width="20" height="18">
 <path d="M2.4,9.6 L4.9,2.6 L7.4,9.6 M3.3,7.3 H6.5" fill="none" stroke="#f43b3b" stroke-width="1.3"/>
 <path d="M12.8,2.2 V6.5" stroke="#3a4660" stroke-width="1.6"/><path d="M10.2,5.4 L12.8,8 L15.4,5.4z" fill="#3a4660"/>
 <path d="M10.6,9.6 H15.6 L10.8,15.3 H15.9" fill="none" stroke="#2a8cf2" stroke-width="1.5"/>
</svg>
<svg style="position:absolute;left:338px;top:622px" width="110" height="22">
 <rect x="4.7" y="4.5" width="13.2" height="7.5" fill="none" stroke="#505664" stroke-width="1.1"/>
 <rect x="4.2" y="11" width="13.7" height="5.8" fill="#505664"/>
 <rect x="5.3" y="12.9" width="3" height="2" fill="#fff"/><rect x="14.3" y="12.9" width="2.6" height="2" fill="#fff"/>
 <rect x="4.2" y="16.5" width="2.6" height="2.2" fill="#505664"/><rect x="15.3" y="16.5" width="2.6" height="2.2" fill="#505664"/>
 <rect x="3" y="8" width="1.5" height="3" fill="#505664"/><rect x="17.9" y="8" width="1.5" height="3" fill="#505664"/>
 <g transform="translate(31,4)">
  <path d="M3,3 L11,11" stroke="#505664" stroke-width="2.4"/>
  <circle cx="3.3" cy="3.3" r="3" fill="#505664"/><circle cx="10.7" cy="10.7" r="3" fill="#505664"/>
  <rect x="-1" y="0.6" width="2" height="4.5" fill="#fff" transform="translate(3.3,3.3) rotate(135)"/>
  <rect x="-1" y="0.6" width="2" height="4.5" fill="#fff" transform="translate(10.7,10.7) rotate(-45)"/>
 </g>
 <path d="M59.9,13.7 V4.9 H67.9" fill="none" stroke="#505664" stroke-width="1.8"/>
 <rect x="62.9" y="8.3" width="8.2" height="9.6" fill="#505664"/>
 <path d="M64.6,11.8 h4.8 M64.6,14.4 h4.8" stroke="#fff" stroke-width="1.1"/>
 <path d="M87.5,6.5 L96.3,15.5 M96.3,6.5 L87.5,15.5" stroke="#fb3b30" stroke-width="1.9"/>
</svg>
<div style="position:absolute;left:52px;top:647px;width:409px;height:1px;background:#e6e6e6"></div>
<!-- scrollbar -->
<div style="position:absolute;left:444.3px;top:648px;width:16.7px;height:146px;background:#f1f1f1"></div>
<svg style="position:absolute;left:448px;top:654px" width="10" height="6"><path d="M0.5,5 L4.5,0.8 L8.5,5z" fill="#a3a3a3"/></svg>
<div style="position:absolute;left:446px;top:665px;width:12.8px;height:26.6px;background:#c1c1c1"></div>
<svg style="position:absolute;left:448px;top:783px" width="10" height="6"><path d="M0.5,0.8 L4.5,5 L8.5,0.8z" fill="#505050"/></svg>
<div style="position:absolute;left:52px;top:677.2px;width:392px;height:1px;background:#e6e6e6"></div>
<div style="position:absolute;left:52px;top:706.2px;width:392px;height:1px;background:#e6e6e6"></div>
<div style="position:absolute;left:52px;top:735.2px;width:392px;height:1px;background:#e6e6e6"></div>
<div style="position:absolute;left:52px;top:764.4px;width:392px;height:1px;background:#e6e6e6"></div>
<div style="position:absolute;left:52px;top:794.0px;width:392px;height:1px;background:#e6e6e6"></div>
<div class="cb" style="left:59.8px;top:657.4px"></div>
<svg style="position:absolute;left:77px;top:655.2px" width="21" height="14"><rect x="0" y="0" width="21" height="14" fill="#c4ddf6"/><rect x="0" y="0" width="21" height="5" fill="#a9cdf2"/><path d="M8,13 V8 L9.5,6 L11,8 V5 L12,3 L13,5 V8 L14.5,6 L16,8 V13z" fill="#c2705c"/><path d="M10,8 h2 v5 h-2z" fill="#6aa36a"/><path d="M13,9 h2 v4 h-2z" fill="#d4a04a"/><path d="M16.5,13 V9 L17.5,7.5 L18.5,9 V13z" fill="#8c4a3f"/><path d="M2,13 V10.5 L3,9.5 L4,10.5 V13z" fill="#555"/><rect x="0" y="12" width="21" height="2" fill="#6f8fb0"/><rect x="5" y="11.5" width="6" height="1" fill="#c9c0b5"/></svg>
<div class="t val" style="left:104.4px;top:654.4px">Central Square</div>
<div class="t val" style="left:345.3px;top:654.4px">0</div>
<svg style="position:absolute;left:368px;top:656.7px" width="70" height="13">
 <path d="M4.6,4.6 L12,11.6" stroke="#3e4452" stroke-width="2.3" stroke-linecap="round"/>
 <circle cx="4.5" cy="4.5" r="3.3" fill="#3e4452"/>
 <rect x="-1" y="0.5" width="2.1" height="4.5" fill="#fff" transform="translate(4.5,4.5) rotate(135)"/>
 <path d="M30.8,8.2 V1.2 H36.2" fill="none" stroke="#505664" stroke-width="1.7"/>
 <rect x="34" y="3.6" width="6.2" height="7.6" fill="#505664"/>
 <path d="M58.4,1.5 L66.6,10 M66.6,1.5 L58.4,10" stroke="#fb3b30" stroke-width="1.8"/>
</svg>
<div class="cb" style="left:59.8px;top:686.4px"></div>
<svg style="position:absolute;left:77px;top:684.8px" width="21" height="14"><rect x="0" y="0" width="21" height="14" fill="#3e7ad6"/><path d="M0,4 Q3,1 6,3 L4,5z" fill="#dfe8f5"/><path d="M0,14 V7 H2 V5 H4 V8 H5 V4 H7 V7 H9 V5 H11 V8 H13 V4 H15 V6 H17 V3.5 H19 V7 H21 V14z" fill="#6c7178"/><path d="M1,9 h1 M5.5,6 h1 M10,7 h1 M14,6 h1 M18,5 h1 M3,11 h2 M8,10 h2 M15,9 h2" stroke="#b8bcc2" stroke-width="0.8"/><rect x="0" y="12.5" width="21" height="1.5" fill="#8fa2b8"/></svg>
<div class="t val" style="left:104.4px;top:684.3px">City Centre</div>
<div class="t val" style="left:345.3px;top:684.3px">0</div>
<svg style="position:absolute;left:368px;top:686.6px" width="70" height="13">
 <path d="M4.6,4.6 L12,11.6" stroke="#3e4452" stroke-width="2.3" stroke-linecap="round"/>
 <circle cx="4.5" cy="4.5" r="3.3" fill="#3e4452"/>
 <rect x="-1" y="0.5" width="2.1" height="4.5" fill="#fff" transform="translate(4.5,4.5) rotate(135)"/>
 <path d="M30.8,8.2 V1.2 H36.2" fill="none" stroke="#505664" stroke-width="1.7"/>
 <rect x="34" y="3.6" width="6.2" height="7.6" fill="#505664"/>
 <path d="M58.4,1.5 L66.6,10 M66.6,1.5 L58.4,10" stroke="#fb3b30" stroke-width="1.8"/>
</svg>
<div class="cb" style="left:59.8px;top:715.4px"></div>
<svg style="position:absolute;left:77px;top:713.5px" width="21" height="14"><path d="M10.5,3 L16.5,6.8 L14.8,12.5 H6.2 L4.5,6.8z" fill="#2f8ef5"/></svg>
<div class="t val" style="left:104.4px;top:713.4px">City Park</div>
<div class="t val" style="left:345.3px;top:713.4px">1</div>
<svg style="position:absolute;left:368px;top:715.7px" width="70" height="13">
 <path d="M4.6,4.6 L12,11.6" stroke="#3e4452" stroke-width="2.3" stroke-linecap="round"/>
 <circle cx="4.5" cy="4.5" r="3.3" fill="#3e4452"/>
 <rect x="-1" y="0.5" width="2.1" height="4.5" fill="#fff" transform="translate(4.5,4.5) rotate(135)"/>
 <path d="M30.8,8.2 V1.2 H36.2" fill="none" stroke="#505664" stroke-width="1.7"/>
 <rect x="34" y="3.6" width="6.2" height="7.6" fill="#505664"/>
 <path d="M58.4,1.5 L66.6,10 M66.6,1.5 L58.4,10" stroke="#fb3b30" stroke-width="1.8"/>
</svg>
<div class="cb" style="left:59.8px;top:745px"></div>
<svg style="position:absolute;left:77px;top:745.4px" width="21" height="12.5" viewBox="0 0 21 14" preserveAspectRatio="none"><rect x="0" y="0" width="21" height="6" fill="#4a6aa8"/><rect x="0" y="3" width="21" height="3" fill="#7f8fb0"/><rect x="0" y="6" width="21" height="8" fill="#8a5a2a"/><path d="M0,9 L3,6.5 L6,7 L9,5.5 L12,6 L15,5 L18,6.5 L21,6 V9z" fill="#c98a3a"/><path d="M4,7 h1.5 M10,6.5 h1.5 M14,6.5 h2 M17.5,7 h1.5" stroke="#e8d050" stroke-width="1.2"/><path d="M7,6.5 h1 M12.5,7 h1" stroke="#5fbf5f" stroke-width="1.2"/><path d="M16,6 h1" stroke="#c040c0" stroke-width="1.2"/><rect x="0" y="9" width="21" height="5" fill="#b8782e" opacity="0.8"/><path d="M2,11 h4 M9,12 h4 M15,11 h3" stroke="#e0a850" stroke-width="0.8"/></svg>
<div class="t val" style="left:104.4px;top:742.6px">Eatern district</div>
<div class="t val" style="left:345.3px;top:742.6px">0</div>
<svg style="position:absolute;left:368px;top:744.9px" width="70" height="13">
 <path d="M4.6,4.6 L12,11.6" stroke="#3e4452" stroke-width="2.3" stroke-linecap="round"/>
 <circle cx="4.5" cy="4.5" r="3.3" fill="#3e4452"/>
 <rect x="-1" y="0.5" width="2.1" height="4.5" fill="#fff" transform="translate(4.5,4.5) rotate(135)"/>
 <path d="M30.8,8.2 V1.2 H36.2" fill="none" stroke="#505664" stroke-width="1.7"/>
 <rect x="34" y="3.6" width="6.2" height="7.6" fill="#505664"/>
 <path d="M58.4,1.5 L66.6,10 M66.6,1.5 L58.4,10" stroke="#fb3b30" stroke-width="1.8"/>
</svg>
<div class="cb" style="left:59.8px;top:774.2px"></div>
<svg style="position:absolute;left:77px;top:770.3px" width="21" height="19"><rect x="2.9" y="0.3" width="2" height="18" fill="#b88a52"/><path d="M5,1.5 C8,0 10,2 12.5,2.5 C14.5,3 16,2.2 19,1.8 V10 C16,10.5 14.5,11 12.5,10.5 C10,10 8,8.2 5,9.5z" fill="#c98ad8"/><path d="M12.5,2.5 V10.5" stroke="#b070c8" stroke-width="0.8"/></svg>
<div class="t val" style="left:104.4px;top:772.1px">Head Office</div>
<div class="t val" style="left:345.3px;top:772.1px">0</div>
<svg style="position:absolute;left:368px;top:774.4px" width="70" height="13">
 <path d="M4.6,4.6 L12,11.6" stroke="#3e4452" stroke-width="2.3" stroke-linecap="round"/>
 <circle cx="4.5" cy="4.5" r="3.3" fill="#3e4452"/>
 <rect x="-1" y="0.5" width="2.1" height="4.5" fill="#fff" transform="translate(4.5,4.5) rotate(135)"/>
 <path d="M30.8,8.2 V1.2 H36.2" fill="none" stroke="#505664" stroke-width="1.7"/>
 <rect x="34" y="3.6" width="6.2" height="7.6" fill="#505664"/>
 <path d="M58.4,1.5 L66.6,10 M66.6,1.5 L58.4,10" stroke="#fb3b30" stroke-width="1.8"/>
</svg>
<!-- footer -->
<div style="position:absolute;left:52px;top:794px;width:1000px;height:1px;background:#dfe1e4"></div>
<svg style="position:absolute;left:70px;top:804px" width="60" height="20">
 <rect x="3.7" y="3.5" width="15" height="13" fill="none" stroke="#1c2436" stroke-width="1.5"/>
 <rect x="3" y="2.8" width="4.5" height="14.4" fill="#1c2436"/>
 <g fill="#1c2436">
 <rect x="37.6" y="2.8" width="4" height="4"/><rect x="42.9" y="2.8" width="4" height="4"/><rect x="48.2" y="2.8" width="4" height="4"/>
 <rect x="37.6" y="8" width="4" height="4"/><rect x="42.9" y="8" width="4" height="4"/><rect x="48.2" y="8" width="4" height="4"/>
 <rect x="37.6" y="13.2" width="4" height="4"/><rect x="42.9" y="13.2" width="4" height="4"/><rect x="48.2" y="13.2" width="4" height="4"/>
 </g>
</svg>
<div class="t" style="left:433.8px;top:805px;font-size:13.6px;color:#2d3444">© Gurtam</div>
<svg style="position:absolute;left:800px;top:804px" width="135" height="20">
 <rect x="4.7" y="2.9" width="16.6" height="13.9" fill="#a8acb4"/>
 <rect x="5.7" y="4" width="14.6" height="2.8" fill="#fff"/>
 <rect x="8.2" y="9.7" width="9.8" height="1.3" fill="#fff"/><rect x="8.2" y="12.6" width="5.3" height="1.3" fill="#fff"/>
 <rect x="38" y="3" width="15.6" height="11.9" fill="#a8acb4"/>
 <path d="M39.2,4 L46,10.5 L52.6,4" fill="none" stroke="#fff" stroke-width="1.4"/>
 <path d="M48.5,12.5 h4" stroke="#fff" stroke-width="3.5"/>
 <path d="M53,9 h7" stroke="#a8acb4" stroke-width="1.8"/><path d="M52,9 l4,-3 v6z" fill="#a8acb4"/>
 <path d="M49,14.5 h6.5" stroke="#a8acb4" stroke-width="1.8"/><path d="M57.5,14.5 l-4,-3 v6z" fill="#a8acb4"/>
 <rect x="76.8" y="3" width="16" height="13.8" fill="#a8acb4"/>
 <circle cx="80.8" cy="7.2" r="1.7" fill="#fff"/>
 <path d="M78.2,15.5 V13.3 L82,10.5 L85,13 L88.5,9.5 L91.4,12.5 V15.5z" fill="#fff"/>
 <rect x="109.6" y="3.6" width="9" height="12.6" fill="#1c2436"/>
 <rect x="119.8" y="3.6" width="8.8" height="12.6" fill="#1c2436"/>
 <path d="M111.3,6.5 h5.5 M111.3,9 h5.5 M111.3,11.5 h5.5 M111.3,14 h5.5" stroke="#fff" stroke-width="1.1"/>
</svg>
<div class="t" style="left:945px;top:805.5px;font-size:13.6px;color:#2d3444">09:40:56 (+03)</div>
<!-- annotation -->
<svg style="position:absolute;left:0;top:385px" width="610" height="42" viewBox="0 385 610 42">
 <rect x="30" y="404.3" width="568" height="3.6" fill="#fff"/>
 <rect x="30" y="404.9" width="568" height="2.2" fill="#0c1738"/>
 <circle cx="598" cy="406" r="3.6" fill="#0c1738"/>
 <circle cx="15.8" cy="405.8" r="16" fill="#6ddfee"/>
 <text x="15.6" y="411.2" font-family="Liberation Sans" font-size="15" fill="#fff" stroke="#fff" stroke-width="0.4" text-anchor="middle">3</text>
</svg>
</body></html>
